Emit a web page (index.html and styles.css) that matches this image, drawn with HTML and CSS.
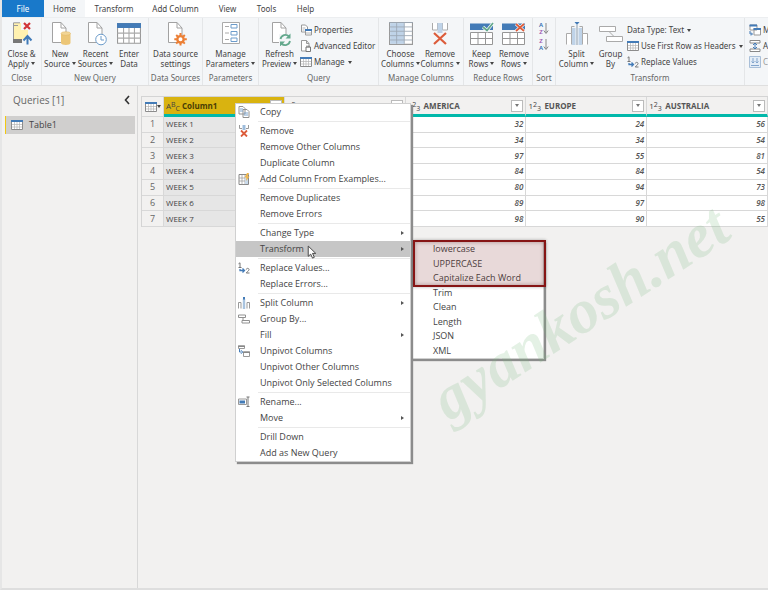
FILE: index.html
```html
<!DOCTYPE html>
<html lang="en">
<head>
<meta charset="utf-8">
<title>Query Editor</title>
<link rel="stylesheet" href="styles.css">
</head>
<body>
<svg class="defs" aria-hidden="true">
  <symbol id="page" viewBox="0 0 22 24"><path d="M3.500.5H12l5 5.500V20.500H3.500Z" fill="#fff" stroke="#a2a2a2"/><path d="M12 .5V6h5" fill="none" stroke="#a2a2a2"/></symbol>
  <symbol id="close-apply" viewBox="0 0 22 24"><path d="M2 1h8v16H2z" fill="#fff1b0"/><path d="M2.500 18V.800H9M2.500 3.500H7" fill="none" stroke="#999"/><path d="M9 8h8v9H9z" fill="#fff1b0"/><path d="M2 17h9v4H2z" fill="#777"/><path d="m13 1 6 6m0-6-6 6" stroke="#d13438" stroke-width="2.200"/><path d="M16.500 22.500V14m-4 4.500 4-4.500 4 4.500" fill="none" stroke="#3f7ab8" stroke-width="2"/></symbol>
  <symbol id="new-source" viewBox="0 0 22 24"><use href="#page"/><path d="M12 11.500v9.500c0 2.600 9.500 2.600 9.500 0v-9.500" fill="#ecc677"/><ellipse cx="16.750" cy="11.500" rx="4.750" ry="1.800" fill="#f2d596" stroke="#dcb25c" stroke-width=".5"/></symbol>
  <symbol id="recent" viewBox="0 0 22 24"><use href="#page"/><circle cx="16" cy="17.500" r="5.300" fill="#fff" stroke="#6c9ccb"/><path d="M16 14v4h3" fill="none" stroke="#6c9ccb"/></symbol>
  <symbol id="grid" viewBox="0 0 22 20"><path d="M.5.5h21v18H.5z" fill="#fff" stroke="#999"/><path d="M0 0h22v4.500H0z" fill="#437bb7"/><path d="M.5 9.200h21M.5 13.800h21M6 4.500v14M11 4.500v14M16 4.500v14" stroke="#aaa"/></symbol>
  <symbol id="mini-grid" viewBox="0 0 12 12"><path d="M.5 1.500h11v9H.5z" fill="#fff" stroke="#8c8c8c"/><path d="M1 5.500h10M1 8h10M3.500 3v7M6 3v7M8.500 3v7" stroke="#b5b5b5" stroke-width=".7"/><path d="M0 1h12v2H0z" fill="#437bb7"/></symbol>
  <symbol id="settings" viewBox="0 0 22 24"><use href="#page"/><circle cx="15.500" cy="17.300" r="3.200" fill="#fff" stroke="#ec7f35" stroke-width="2.400"/><path d="M15.500 11v2.500m0 7.500v2.500M9.300 17.300h2.500m7.500 0h2.500M11.200 13l1.700 1.700m5.200 5.200 1.700 1.700m0-8.600-1.700 1.700m-5.200 5.200-1.700 1.700" stroke="#ec7f35" stroke-width="2"/></symbol>
  <symbol id="params" viewBox="0 0 22 24"><path d="M2.500.5h17v21h-17z" fill="#fff" stroke="#aaa"/><path d="M5 4.500h4M5 11h4M5 17.500h4" stroke="#aaa"/><path d="M11 2.500h6V6h-6zM11 9.500h6V13h-6zM11 16h6v3.500h-6z" fill="#fff" stroke="#6c9ccb"/></symbol>
  <symbol id="refresh" viewBox="0 0 22 24"><use href="#page"/><path d="M10 12h12v12H10z" fill="#f4f6f8"/><path d="M11.500 17a5 5 0 0 1 8.500-2.500M21 19a5 5 0 0 1-8.500 2.500" fill="none" stroke="#63a88c" stroke-width="1.800"/><path d="M21.500 11.500v5h-5zM11 24.500v-5h5z" fill="#63a88c"/></symbol>
  <symbol id="properties" viewBox="0 0 12 12"><path d="M1.500 1h4l2 2v5h-6z" fill="#fff" stroke="#999"/><path d="M5.500 5.500h6v5.500h-6z" fill="#fff" stroke="#999"/><path d="M5 5h7v2H5z" fill="#437bb7"/><path d="M2.500 4h3M2.500 6h2M6 9h5" stroke="#999" stroke-width=".7"/></symbol>
  <symbol id="editor" viewBox="0 0 12 12"><path d="M1.500.5h5l2.500 3v7.500h-7.500z" fill="#fff" stroke="#999"/><path d="M6.500.5v3H9" fill="none" stroke="#999"/><path d="M6 7h4.500v4.500H6z" fill="#fff" stroke="#777"/><path d="M7 5.500v2m2-2v2" stroke="#777"/></symbol>
  <symbol id="choose" viewBox="0 0 22 22"><path d="M.5.5h21v20H.5z" fill="#fff" stroke="#999"/><path d="M1 1h13v19H1z" fill="#bfd3e8"/><path d="M0 .500h22M.5 4.500h21M.5 8.500h21M.5 12.500h21M.5 16.500h21M7 1v19M14 1v19" stroke="#9da9b5" stroke-width=".8"/></symbol>
  <symbol id="remove-col" viewBox="0 0 22 24"><path d="M3.500 1v7h5V1M13.500 1v7h5V1" fill="#fff" stroke="#aaa"/><path d="M8.500 1h5v10h-5z" fill="#bfd3e8"/><path d="m5 11 12 11M17 11 5 22" stroke="#dc5c3b" stroke-width="2.200"/></symbol>
  <symbol id="mini-remove" viewBox="0 0 12 12"><path d="M1.500 0v3.500h2.500M10.500 0v3.500H8" fill="none" stroke="#999"/><path d="M4.500 0h3v5h-3z" fill="#9dbcdc"/><path d="m3 5.500 6 6m0-6-6 6" stroke="#dc5c3b" stroke-width="1.800"/></symbol>
  <symbol id="rows" viewBox="0 0 24 22"><path d="M.5 9.500h22v12H.5zM8 9.500v12M15.500 9.500v12M.5 15.500h22" fill="#fff" stroke="#969696"/><path d="M0 .5h23V7H0z" fill="#437bb7"/></symbol>
  <symbol id="keep" viewBox="0 0 24 22"><use href="#rows"/><path d="m13 4 4 3.500L23 0" fill="none" stroke="#fff" stroke-width="3"/><path d="m13 4 4 3.500L23 0" fill="none" stroke="#63a88c" stroke-width="1.800"/></symbol>
  <symbol id="drop" viewBox="0 0 24 22"><use href="#rows"/><path d="m14 1 8 7m0-7-8 7" stroke="#fff" stroke-width="3"/><path d="m14 1 8 7m0-7-8 7" stroke="#dc5c3b" stroke-width="1.800"/></symbol>
  <symbol id="arrow-down" viewBox="0 0 6 12"><path d="M3 0v10M.8 7.500 3 10.500l2.200-3" fill="none" stroke="#888"/></symbol>
  <symbol id="split" viewBox="0 0 24 24"><path d="M1.500 22.500V11.500h5v11M17.500 22.500V11.500h5v11" fill="#fff" stroke="#aaa"/><path d="M6.500 11.500V4.500h3M17.500 11.500V4.500h-3" fill="none" stroke="#aaa"/><path d="M7 6h3.500v17H7zM13.500 6H17v17h-3.500z" fill="#bfd3e8"/><path d="M12 3v20" stroke="#8a9cad"/><path d="M9.500 0h5L12 3z" fill="#437bb7"/></symbol>
  <symbol id="mini-split" viewBox="0 0 12 12"><path d="M.5 11.500V5.500H3v6M9 11.500V5.500h2.500v6" fill="none" stroke="#999"/><path d="M4.800 2h2.400v10H4.800z" fill="#a9c4e0"/><path d="M6 0v2.500" stroke="#437bb7" stroke-width="2"/></symbol>
  <symbol id="group" viewBox="0 0 24 20"><path d="M.5 2.500h16v5H.5zM7.500 12.500h16v5h-16z" fill="#fff" stroke="#aaa"/><path d="m10 7.500 5 5" stroke="#aaa"/></symbol>
  <symbol id="mini-group" viewBox="0 0 12 12"><path d="M.5 2h7v2.500h-7zM4 7.500h7.500V10H4z" fill="#fff" stroke="#909090"/><path d="M5 4.500v3" stroke="#909090"/></symbol>
  <symbol id="replace" viewBox="0 0 12 12"><path d="m.5 1.800 1.500-1v4.700M.5 5.500h3M8.300 7.500c0-1.600 3-1.500 2.700.2-.2 1.500-2.200 2-2.700 3.300h3.200" fill="none" stroke="#777"/><path d="M2 7v1.500h4M4.500 6.500l2 2-2 2" fill="none" stroke="#437bb7" stroke-width="1.300"/></symbol>
  <symbol id="merge" viewBox="0 0 12 12"><path d="M1 1h7v5H1zM5 4.500h6.500V11H5z" fill="#fff" stroke="#999"/><path d="M.5.5H8v2H.5zM4.500 4H12v2H4.500z" fill="#437bb7"/><path d="M1 7v3h2m-1-1.500L3.500 10 2 11.500" fill="none" stroke="#437bb7"/></symbol>
  <symbol id="append" viewBox="0 0 12 12"><path d="M1 .5h10v2.500H1zM1 9h10v2.500H1z" fill="#fff" stroke="#888"/><path d="M6 3v6M4 5l2-2 2 2M4 7l2 2 2-2" fill="none" stroke="#437bb7"/></symbol>
  <symbol id="combine" viewBox="0 0 12 12"><path d="M.5.5h11v11H.5z" fill="#e4edf7" stroke="#a9bfd8"/><path d="M4 2v5M2.500 5.500 4 7l1.500-1.500M8 2v5M6.500 5.500 8 7l1.500-1.500M2 9.500h8" fill="none" stroke="#83a5cc"/></symbol>
  <symbol id="copy" viewBox="0 0 12 12"><path d="M1 .5h4l2 2V8H1zM5 3.500h4l2 2v6H5z" fill="#fff" stroke="#909090"/><path d="M2 3h3M2 5h3M6 7h4M6 9h4" stroke="#7ba3ce"/></symbol>
  <symbol id="examples" viewBox="0 0 12 12"><path d="M1 1.500h9.500v10H1z" fill="#fff" stroke="#888"/><path d="M4 1.500v10M7 1.500v10M1 5h9.500M1 8h9.500" stroke="#999" stroke-width=".7"/><path d="M7 2h3v9H7z" fill="#c9daeb"/><path d="M9 0 6.500 4.500h2L8 8l3.500-4.500h-2L11 0z" fill="#f0b64a"/></symbol>
  <symbol id="unpivot" viewBox="0 0 12 12"><path d="M.5 1h6v2.500h-6zM5.500 7h6v4.500h-6z" fill="#fff" stroke="#999"/><path d="M0 .5h7V2H0zM5 6.500h7V8H5z" fill="#888"/><path d="M1.500 4v3h2M3 5.200 4.700 7 3 8.800" fill="none" stroke="#437bb7"/></symbol>
  <symbol id="rename" viewBox="0 0 12 12"><path d="M.5 3h8v5.500h-8z" fill="#fff" stroke="#999"/><path d="M1.500 4.500H7v3H1.500z" fill="#437bb7"/><path d="M8.500 1h3M10 1v9.500M8.500 10.500h3" stroke="#777"/></symbol>
</svg>

<main class="app">
  <nav class="tabs" aria-label="Ribbon tabs">
    <button class="tab tab-file">File</button>
    <button class="tab tab-active">Home</button>
    <button class="tab">Transform</button>
    <button class="tab">Add Column</button>
    <button class="tab">View</button>
    <button class="tab">Tools</button>
    <button class="tab">Help</button>
  </nav>

  <section class="ribbon" aria-label="Home ribbon">
    <div class="group g-close">
      <div class="tools"><button class="big"><svg><use href="#close-apply"/></svg><span>Close &amp;</span><span>Apply <i class="caret"></i></span></button></div>
      <div class="caption">Close</div>
    </div>
    <div class="group g-new">
      <div class="tools">
        <button class="big"><svg><use href="#new-source"/></svg><span>New</span><span>Source <i class="caret"></i></span></button>
        <button class="big"><svg><use href="#recent"/></svg><span>Recent</span><span>Sources <i class="caret"></i></span></button>
        <button class="big"><svg><use href="#grid"/></svg><span>Enter</span><span>Data</span></button>
      </div>
      <div class="caption">New Query</div>
    </div>
    <div class="group g-data">
      <div class="tools"><button class="big"><svg><use href="#settings"/></svg><span>Data source</span><span>settings</span></button></div>
      <div class="caption">Data Sources</div>
    </div>
    <div class="group g-params">
      <div class="tools"><button class="big"><svg><use href="#params"/></svg><span>Manage</span><span>Parameters <i class="caret"></i></span></button></div>
      <div class="caption">Parameters</div>
    </div>
    <div class="group g-query">
      <div class="tools">
        <button class="big"><svg><use href="#refresh"/></svg><span>Refresh</span><span>Preview <i class="caret"></i></span></button>
        <div class="stack">
          <button class="small"><svg><use href="#properties"/></svg>Properties</button>
          <button class="small"><svg><use href="#editor"/></svg>Advanced Editor</button>
          <button class="small"><svg><use href="#mini-grid"/></svg>Manage <i class="caret"></i></button>
        </div>
      </div>
      <div class="caption">Query</div>
    </div>
    <div class="group g-cols">
      <div class="tools">
        <button class="big"><svg><use href="#choose"/></svg><span>Choose</span><span>Columns <i class="caret"></i></span></button>
        <button class="big"><svg><use href="#remove-col"/></svg><span>Remove</span><span>Columns <i class="caret"></i></span></button>
      </div>
      <div class="caption">Manage Columns</div>
    </div>
    <div class="group g-rows">
      <div class="tools">
        <button class="big"><svg><use href="#keep"/></svg><span>Keep</span><span>Rows <i class="caret"></i></span></button>
        <button class="big"><svg><use href="#drop"/></svg><span>Remove</span><span>Rows <i class="caret"></i></span></button>
      </div>
      <div class="caption">Reduce Rows</div>
    </div>
    <div class="group g-sort">
      <div class="tools sorts">
        <button class="sort" aria-label="Sort ascending"><span class="az"><b class="a">A</b><b class="z">Z</b></span><svg><use href="#arrow-down"/></svg></button>
        <button class="sort" aria-label="Sort descending"><span class="az"><b class="z">Z</b><b class="a">A</b></span><svg><use href="#arrow-down"/></svg></button>
      </div>
      <div class="caption">Sort</div>
    </div>
    <div class="group g-transform">
      <div class="tools">
        <button class="big"><svg><use href="#split"/></svg><span>Split</span><span>Column <i class="caret"></i></span></button>
        <button class="big"><svg><use href="#group"/></svg><span>Group</span><span>By</span></button>
        <div class="stack">
          <button class="small">Data Type: Text <i class="caret"></i></button>
          <button class="small"><svg><use href="#mini-grid"/></svg>Use First Row as Headers <i class="caret"></i></button>
          <button class="small"><svg><use href="#replace"/></svg>Replace Values</button>
        </div>
      </div>
      <div class="caption">Transform</div>
    </div>
    <div class="group g-combine">
      <div class="tools">
        <div class="stack">
          <button class="small"><svg><use href="#merge"/></svg>Merge Queries</button>
          <button class="small"><svg><use href="#append"/></svg>Append Queries</button>
          <button class="small muted"><svg><use href="#combine"/></svg>Combine Files</button>
        </div>
      </div>
    </div>
  </section>

  <div class="workspace">
    <aside class="queries">
      <header class="queries-head"><h2>Queries [1]</h2><button class="collapse" aria-label="Collapse"><svg viewBox="0 0 6 10"><path d="M5 1 1.500 5 5 9" fill="none" stroke="#333" stroke-width="1.600"/></svg></button></header>
      <button class="query"><svg><use href="#mini-grid"/></svg>Table1</button>
    </aside>

    <section class="preview">
      <table class="data">
        <colgroup><col class="c-index"><col><col><col><col><col></colgroup>
        <thead>
          <tr>
            <th><div class="corner"><svg><use href="#mini-grid"/></svg><i class="caret"></i></div></th>
            <th class="selected"><div class="head"><span class="type">A<sup>B</sup><sub>C</sub></span><span class="name">Column1</span><button class="filter" aria-label="Filter Column1"><i class="caret"></i></button></div></th>
            <th><div class="head"><span class="type">1<sup>2</sup><sub>3</sub></span><span class="name">ASIA</span><button class="filter" aria-label="Filter ASIA"><i class="caret"></i></button></div></th>
            <th><div class="head"><span class="type">1<sup>2</sup><sub>3</sub></span><span class="name">AMERICA</span><button class="filter" aria-label="Filter AMERICA"><i class="caret"></i></button></div></th>
            <th><div class="head"><span class="type">1<sup>2</sup><sub>3</sub></span><span class="name">EUROPE</span><button class="filter" aria-label="Filter EUROPE"><i class="caret"></i></button></div></th>
            <th><div class="head"><span class="type">1<sup>2</sup><sub>3</sub></span><span class="name">AUSTRALIA</span><button class="filter" aria-label="Filter AUSTRALIA"><i class="caret"></i></button></div></th>
          </tr>
        </thead>
        <tbody>
          <tr><th>1</th><td>WEEK 1</td><td></td><td>32</td><td>24</td><td>56</td></tr>
          <tr><th>2</th><td>WEEK 2</td><td></td><td>34</td><td>34</td><td>54</td></tr>
          <tr><th>3</th><td>WEEK 3</td><td></td><td>97</td><td>55</td><td>81</td></tr>
          <tr><th>4</th><td>WEEK 4</td><td></td><td>84</td><td>84</td><td>54</td></tr>
          <tr><th>5</th><td>WEEK 5</td><td></td><td>80</td><td>94</td><td>73</td></tr>
          <tr><th>6</th><td>WEEK 6</td><td></td><td>89</td><td>97</td><td>98</td></tr>
          <tr><th>7</th><td>WEEK 7</td><td></td><td>98</td><td>90</td><td>55</td></tr>
        </tbody>
      </table>
    </section>
  </div>

  <div class="menu submenu" role="menu" aria-label="Transform">
    <button role="menuitem">lowercase</button>
    <button role="menuitem">UPPERCASE</button>
    <button role="menuitem">Capitalize Each Word</button>
    <button role="menuitem">Trim</button>
    <button role="menuitem">Clean</button>
    <button role="menuitem">Length</button>
    <button role="menuitem">JSON</button>
    <button role="menuitem">XML</button>
  </div>

  <div class="menu context" role="menu" aria-label="Column">
    <button role="menuitem"><svg><use href="#copy"/></svg>Copy</button>
    <hr>
    <button role="menuitem"><svg><use href="#mini-remove"/></svg>Remove</button>
    <button role="menuitem">Remove Other Columns</button>
    <button role="menuitem">Duplicate Column</button>
    <button role="menuitem"><svg><use href="#examples"/></svg>Add Column From Examples...</button>
    <hr>
    <button role="menuitem">Remove Duplicates</button>
    <button role="menuitem">Remove Errors</button>
    <hr>
    <button role="menuitem" class="more">Change Type</button>
    <button role="menuitem" class="more open">Transform</button>
    <hr>
    <button role="menuitem"><svg><use href="#replace"/></svg>Replace Values...</button>
    <button role="menuitem">Replace Errors...</button>
    <hr>
    <button role="menuitem" class="more"><svg><use href="#mini-split"/></svg>Split Column</button>
    <button role="menuitem"><svg><use href="#mini-group"/></svg>Group By...</button>
    <button role="menuitem" class="more">Fill</button>
    <button role="menuitem"><svg><use href="#unpivot"/></svg>Unpivot Columns</button>
    <button role="menuitem">Unpivot Other Columns</button>
    <button role="menuitem">Unpivot Only Selected Columns</button>
    <hr>
    <button role="menuitem"><svg><use href="#rename"/></svg>Rename...</button>
    <button role="menuitem" class="more">Move</button>
    <hr>
    <button role="menuitem">Drill Down</button>
    <button role="menuitem">Add as New Query</button>
  </div>

  <div class="highlight"></div>
  <svg class="cursor" viewBox="0 0 9 13"><path d="M1 1v9.500l2.300-2 1.700 3.700 1.700-.8L5 7.800h3z" fill="#fff" stroke="#444" stroke-width=".9"/></svg>
  <div class="watermark">gyankosh.net</div>
</main>
</body>
</html>
```
FILE: styles.css
```css
* { box-sizing: border-box; }
body {
  margin: 0;
  overflow: hidden;
  font-family: "Open Sans", "Noto Sans", sans-serif;
  font-size: 8px;
  line-height: 10px;
  color: #444;
  background: #f2f1f0;
}
button {
  margin: 0;
  padding: 0;
  border: 0;
  background: none;
  font: inherit;
  color: inherit;
  white-space: nowrap;
}
.defs { position: absolute; width: 0; height: 0; }
.app {
  position: relative;
  display: flex;
  flex-direction: column;
  min-height: 100vh;
  border-left: 2px solid #e6e6e6;
  border-bottom: 2px solid #dedede;
}
.caret {
  display: inline-block;
  border: 2px solid transparent;
  border-top: 3px solid #444;
  border-bottom: 0;
  vertical-align: 2px;
}

/* Tabs */
.tabs, .ribbon { font-family: "Noto Sans", "Open Sans", sans-serif; }
.tabs {
  display: grid;
  grid-template-columns: 42px 41px 58px 65px 39px 39px 39px;
  height: 17px;
  background: #fff;
}
.tab-file { background: #1979ca; color: #fff; }
.tab-active { background: #f4f6f8; }

/* Ribbon */
.ribbon {
  display: flex;
  height: 69px;
  overflow: hidden;
  background: #f4f6f8;
  border-top: 1px solid #eceef0;
  border-bottom: 1px solid #dfdfdf;
}
.group {
  display: flex;
  flex: none;
  flex-direction: column;
  border-right: 1px solid #e4e6e8;
}
.g-close { width: 40px; }
.g-new { width: 107px; }
.g-data { width: 54px; }
.g-params { width: 56px; }
.g-query { width: 120px; }
.g-cols { width: 85px; }
.g-rows { width: 69px; }
.g-sort { width: 23px; }
.g-transform { width: 189px; }
.g-combine { flex: 1 0 0; border: 0; }
.tools {
  display: grid;
  flex: 1;
  grid-template-columns: 1fr;
  padding-top: 4px;
}
.g-new .tools { grid-template-columns: 36px 35px 32px; }
.g-query .tools { grid-template-columns: 41px 1fr; }
.g-cols .tools { grid-template-columns: 43px 36px; }
.g-rows .tools { grid-template-columns: 35px 30px; }
.g-transform .tools { grid-template-columns: 41px 27px 1fr; }
.caption {
  height: 12px;
  text-align: center;
  white-space: nowrap;
  color: #666;
}
.big {
  display: flex;
  flex-direction: column;
  align-items: center;
  min-width: 0;
}
.big svg { flex: none; width: 24px; height: 24px; margin-bottom: 3px; }
.stack {
  display: flex;
  flex-direction: column;
  align-items: flex-start;
  min-width: 0;
}
.small {
  display: flex;
  align-items: center;
  height: 16px;
}
.small svg { width: 12px; height: 12px; margin-right: 2px; }
.small .caret { margin-left: 3px; }
.g-transform .stack { padding-left: 3px; }
.g-combine .stack { padding-left: 4px; }
.muted { color: #999; }
.sorts { align-content: start; justify-items: center; row-gap: 2px; }
.sort { display: flex; align-items: center; height: 14px; }
.sort svg { width: 6px; height: 12px; }
.az { display: flex; flex-direction: column; line-height: 7px; font-size: 6px; }
.az b { font-weight: 600; }
.a { color: #2f6fb3; }
.z { color: #9b55ae; }

/* Queries pane */
.workspace { display: flex; flex: 1; }
.queries {
  flex: none;
  width: 136px;
  border-right: 1px solid #d8d8d8;
}
.queries-head {
  display: flex;
  align-items: center;
  justify-content: space-between;
  height: 28px;
  margin-bottom: 2px;
  padding: 0 7px 0 11px;
}
.queries-head h2 {
  margin: 0;
  font-size: 10px;
  font-weight: 400;
  color: #666;
}
.collapse svg { display: block; width: 6px; height: 10px; }
.query {
  display: flex;
  align-items: center;
  width: 130px;
  height: 18px;
  margin-left: 3px;
  padding-left: 5px;
  border-left: 1px solid #f2c811;
  background: #d0cfce;
  font-size: 9px;
}
.query svg { width: 12px; height: 12px; margin-right: 6px; }

/* Data preview */
.preview { flex: 1; min-width: 0; padding: 10px 0 0 3px; }
.data {
  width: 100%;
  height: 131px;
  table-layout: fixed;
  border-collapse: separate;
  border-spacing: 0;
  border-top: 1px solid #d4d4d4;
  border-left: 1px solid #d4d4d4;
}
.c-index { width: 22px; }
.data th, .data td {
  padding: 0 2px;
  border-right: 1px solid #d8d8d8;
  border-bottom: 1px solid #d8d8d8;
  line-height: 10px;
}
.data thead th { height: 20px; padding: 0; border-bottom: 3px solid #01b8aa; text-align: left; }
.data thead th:first-child { border-bottom: 1px solid #d8d8d8; }
.data tbody th { font-weight: 400; font-size: 9px; color: #666; }
.data td { background: #fff; text-align: right; font-style: italic; font-weight: 600; color: #555; }
.data td:nth-child(2) { background: #e6e6e6; text-align: left; font-style: normal; font-weight: 500; color: #444; }
.data .selected { background: #d9b310; }
.head { display: flex; align-items: center; padding: 0 2px; }
.name { flex: 1; color: #555; }
.selected .name { color: #4a3d05; }
.type {
  width: 16px;
  font-size: 8px;
  font-weight: 500;
  line-height: 10px;
}
.type sup, .type sub { font-size: 7px; line-height: 0; }
.type sup { vertical-align: 2px; }
.type sub { vertical-align: -2px; }
.filter {
  display: flex;
  align-items: center;
  justify-content: center;
  width: 12px;
  height: 12px;
  border: 1px solid #bbb;
  background: #fff;
}
.filter .caret { border-top-color: #777; }
.corner { display: flex; align-items: center; padding-left: 3px; }
.corner svg { width: 12px; height: 12px; }

/* Menus */
.menu {
  position: absolute;
  background: #fff;
  font-size: 9px;
  border: 1px solid #d0d0d0;
  box-shadow: 2px 2px 1px #8c8c8c;
}
.menu button {
  display: flex;
  align-items: center;
  text-align: left;
}
.context {
  left: 233px;
  top: 103px;
  width: 176px;
}
.context button {
  position: relative;
  width: 100%;
  height: 16px;
  padding-left: 24px;
}
.context svg { position: absolute; left: 2px; top: 2px; width: 12px; height: 12px; }
.context hr {
  height: 1px;
  margin: 1px 0 1px 22px;
  border: 0;
  background: #e9e9e9;
}
.more::after {
  content: "";
  margin: 0 6px 0 auto;
  border: 2px solid transparent;
  border-left: 3px solid #555;
  border-right: 0;
}
.context .open { background: #c6c6c6; }
.submenu {
  left: 409px;
  top: 241px;
  display: grid;
  grid-template-rows: repeat(4, 14px 15px);
  width: 133px;
}
.submenu button { padding-left: 21px; }
.highlight {
  position: absolute;
  left: 411px;
  top: 240px;
  width: 133px;
  height: 47px;
  border: 2px solid #861515;
  background: rgb(130 45 45 / 18%);
  box-shadow: inset 0 0 4px rgb(60 0 0 / 35%), 0 0 3px rgb(0 0 0 / 30%);
}
.cursor { position: absolute; left: 305px; top: 245px; width: 10px; height: 14px; }
.watermark {
  position: absolute;
  left: 408px;
  top: 276px;
  font: italic 700 62px/72px "Liberation Serif", cursive;
  color: rgb(120 185 125 / 20%);
  transform: rotate(-33deg);
  pointer-events: none;
}
```
